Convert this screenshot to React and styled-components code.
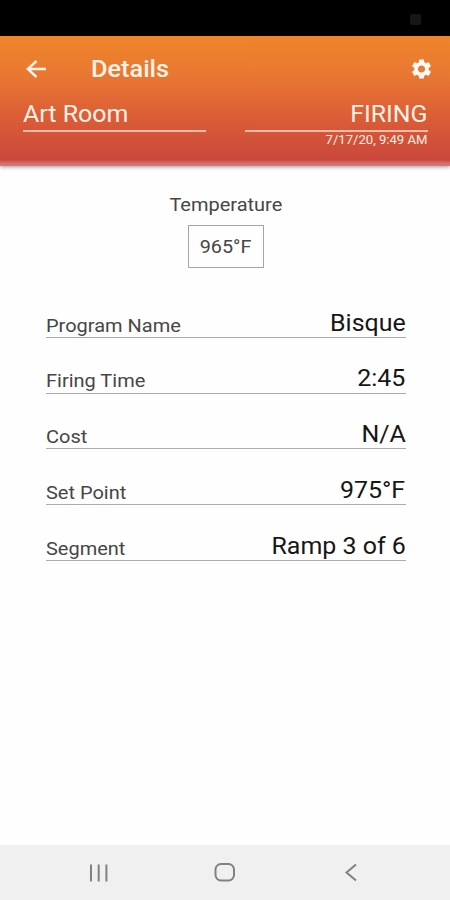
import React from "react";
import styled, { createGlobalStyle } from "styled-components";

const rows = [
  { label: "Program Name", value: "Bisque" },
  { label: "Firing Time", value: "2:45" },
  { label: "Cost", value: "N/A" },
  { label: "Set Point", value: "975°F" },
  { label: "Segment", value: "Ramp 3 of 6" },
];

export default function App() {
  return (
    <Screen>
      <GlobalStyle />
      <StatusBar>
        <Camera />
      </StatusBar>
      <Header>
        <Toolbar>
          <BackIcon viewBox="0 0 20 18">
            <path d="M20 9H1.5M10.5 1L1.8 9L10.5 17" />
          </BackIcon>
          <Title>
            <Wide $scale={1.1}>Details</Wide>
          </Title>
          <GearIcon viewBox="2 2 20 20">
            <path d="M19.14 12.94c.04-.3.06-.61.06-.94 0-.32-.02-.64-.07-.94l2.03-1.58c.18-.14.23-.41.12-.61l-1.92-3.32c-.12-.22-.37-.29-.59-.22l-2.39.96c-.5-.38-1.03-.7-1.62-.94l-.36-2.54c-.04-.24-.24-.41-.48-.41h-3.84c-.24 0-.43.17-.47.41l-.36 2.54c-.59.24-1.13.57-1.62.94l-2.39-.96c-.22-.08-.47 0-.59.22L2.74 8.87c-.12.21-.08.47.12.61l2.03 1.58c-.05.3-.09.63-.09.94s.02.64.07.94l-2.03 1.58c-.18.14-.23.41-.12.61l1.92 3.32c.12.22.37.29.59.22l2.39-.96c.5.38 1.03.7 1.62.94l.36 2.54c.05.24.24.41.48.41h3.84c.24 0 .44-.17.47-.41l.36-2.54c.59-.24 1.13-.56 1.62-.94l2.39.96c.22.08.47 0 .59-.22l1.92-3.32c.12-.22.07-.47-.12-.61l-2.01-1.58zM12 15.6c-1.98 0-3.6-1.62-3.6-3.6s1.62-3.6 3.6-3.6 3.6 1.62 3.6 3.6-1.62 3.6-3.6 3.6z" />
          </GearIcon>
        </Toolbar>
        <Summary>
          <Field>
            <Wide $scale={1.085}>Art Room</Wide>
          </Field>
          <div>
            <Field $right>
              <Wide $scale={1.08} $from="right">FIRING</Wide>
            </Field>
            <Updated>
              <Wide $scale={1.09} $from="right">7/17/20, 9:49 AM</Wide>
            </Updated>
          </div>
        </Summary>
      </Header>
      <Content>
        <Caption>
          <Wide $scale={1.11} $from="center">Temperature</Wide>
        </Caption>
        <Reading>
          <Wide $scale={1.1} $from="center">965°F</Wide>
        </Reading>
        <List>
          {rows.map((row) => (
            <Row key={row.label}>
              <Label $scale={1.11}>{row.label}</Label>
              <Value $scale={1.085} $from="right">{row.value}</Value>
            </Row>
          ))}
        </List>
      </Content>
      <NavBar>
        <svg width="20" height="18" viewBox="0 0 20 18">
          <path d="M2 0.5V17.5M9.7 0.5V17.5M17.4 0.5V17.5" />
        </svg>
        <svg width="22" height="20" viewBox="0 0 22 20">
          <rect x="1.5" y="1" width="18.5" height="16.5" rx="5.5" />
        </svg>
        <svg width="12" height="18" viewBox="0 0 12 18">
          <path d="M11 0.5L1.5 8.5L11 16.5" />
        </svg>
      </NavBar>
    </Screen>
  );
}

const GlobalStyle = createGlobalStyle`
  * {
    box-sizing: border-box;
  }
  body {
    margin: 0;
    background: #fff;
    font-family: Roboto, "Liberation Sans", sans-serif;
  }
`;

// letters are a bit wider than plain Roboto
const Wide = styled.span`
  display: inline-block;
  transform: scaleX(${(props) => props.$scale});
  transform-origin: ${(props) => props.$from || "left"} center;
`;

const Screen = styled.div`
  display: flex;
  flex-direction: column;
  width: 450px;
  height: 900px;
  background: #fefefe;
  overflow: hidden;
`;

const StatusBar = styled.div`
  display: flex;
  justify-content: flex-end;
  height: 36px;
  padding: 14px 29px 0 0;
  background: #000;
`;

const Camera = styled.div`
  width: 11px;
  height: 11px;
  border-radius: 2px;
  background: #161616;
`;

const Header = styled.header`
  height: 130px;
  padding: 0 22.5px 0 23px;
  color: #fff2e8;
  background: linear-gradient(#ee8529, #e97932 28%, #dc5f36 60%, #ca483c 95.5%, #d26462 97%, #d67c7c);
  box-shadow: 0 1px 4px rgba(0, 0, 0, 0.4);
`;

const Toolbar = styled.div`
  display: flex;
  align-items: center;
  height: 64px;
  margin-right: -4px;
`;

const BackIcon = styled.svg`
  width: 20px;
  height: 18px;
  margin: 1px 0 0 3px;
  fill: none;
  stroke: currentColor;
  stroke-width: 2.4;
`;

const Title = styled.h1`
  flex: 1;
  margin: 3px 0 0 45px;
  font-size: 23px;
  font-weight: 500;
  line-height: 28px;
`;

const GearIcon = styled.svg`
  width: 21px;
  height: 20px;
  margin-top: 1px;
  fill: #fffaf5;
`;

const Summary = styled.div`
  display: grid;
  grid-template-columns: 183px 183px;
  justify-content: space-between;
`;

const Field = styled.div`
  height: 32px;
  padding-top: 1px;
  border-bottom: 2px solid #efbca8;
  font-size: 23px;
  line-height: 28px;
  text-align: ${(props) => (props.$right ? "right" : "left")};
`;

const Updated = styled.div`
  font-size: 12px;
  line-height: 16px;
  text-align: right;
`;

const Content = styled.main`
  display: flex;
  flex: 1;
  flex-direction: column;
  align-items: center;
  padding: 27px 44.5px 0 45.5px;
`;

const Caption = styled.div`
  font-size: 18px;
  line-height: 24px;
  color: #464646;
`;

const Reading = styled.div`
  width: 76px;
  height: 43px;
  margin-top: 8px;
  border: 1.5px solid #a5a5a5;
  font-size: 18px;
  line-height: 41px;
  text-align: center;
  color: #464646;
`;

const List = styled.div`
  width: 100%;
  margin-top: 14px;
`;

const Row = styled.div`
  display: flex;
  align-items: flex-start;
  justify-content: space-between;
  height: 55.8px;
  padding-top: 27.7px;
  border-bottom: 1px solid #ababab;
`;

const Label = styled(Wide)`
  margin-top: 2px;
  font-size: 18px;
  line-height: 28px;
  color: #464646;
`;

const Value = styled(Wide)`
  font-size: 23px;
  line-height: 28px;
  color: #161616;
`;

const NavBar = styled.nav`
  display: flex;
  align-items: center;
  justify-content: space-between;
  height: 55px;
  padding: 0 93px 0 89px;
  background: #f0f0f0;

  svg {
    fill: none;
    stroke: #818181;
    stroke-width: 2;
  }

  svg:nth-child(2) {
    margin-right: 4px;
  }
`;
